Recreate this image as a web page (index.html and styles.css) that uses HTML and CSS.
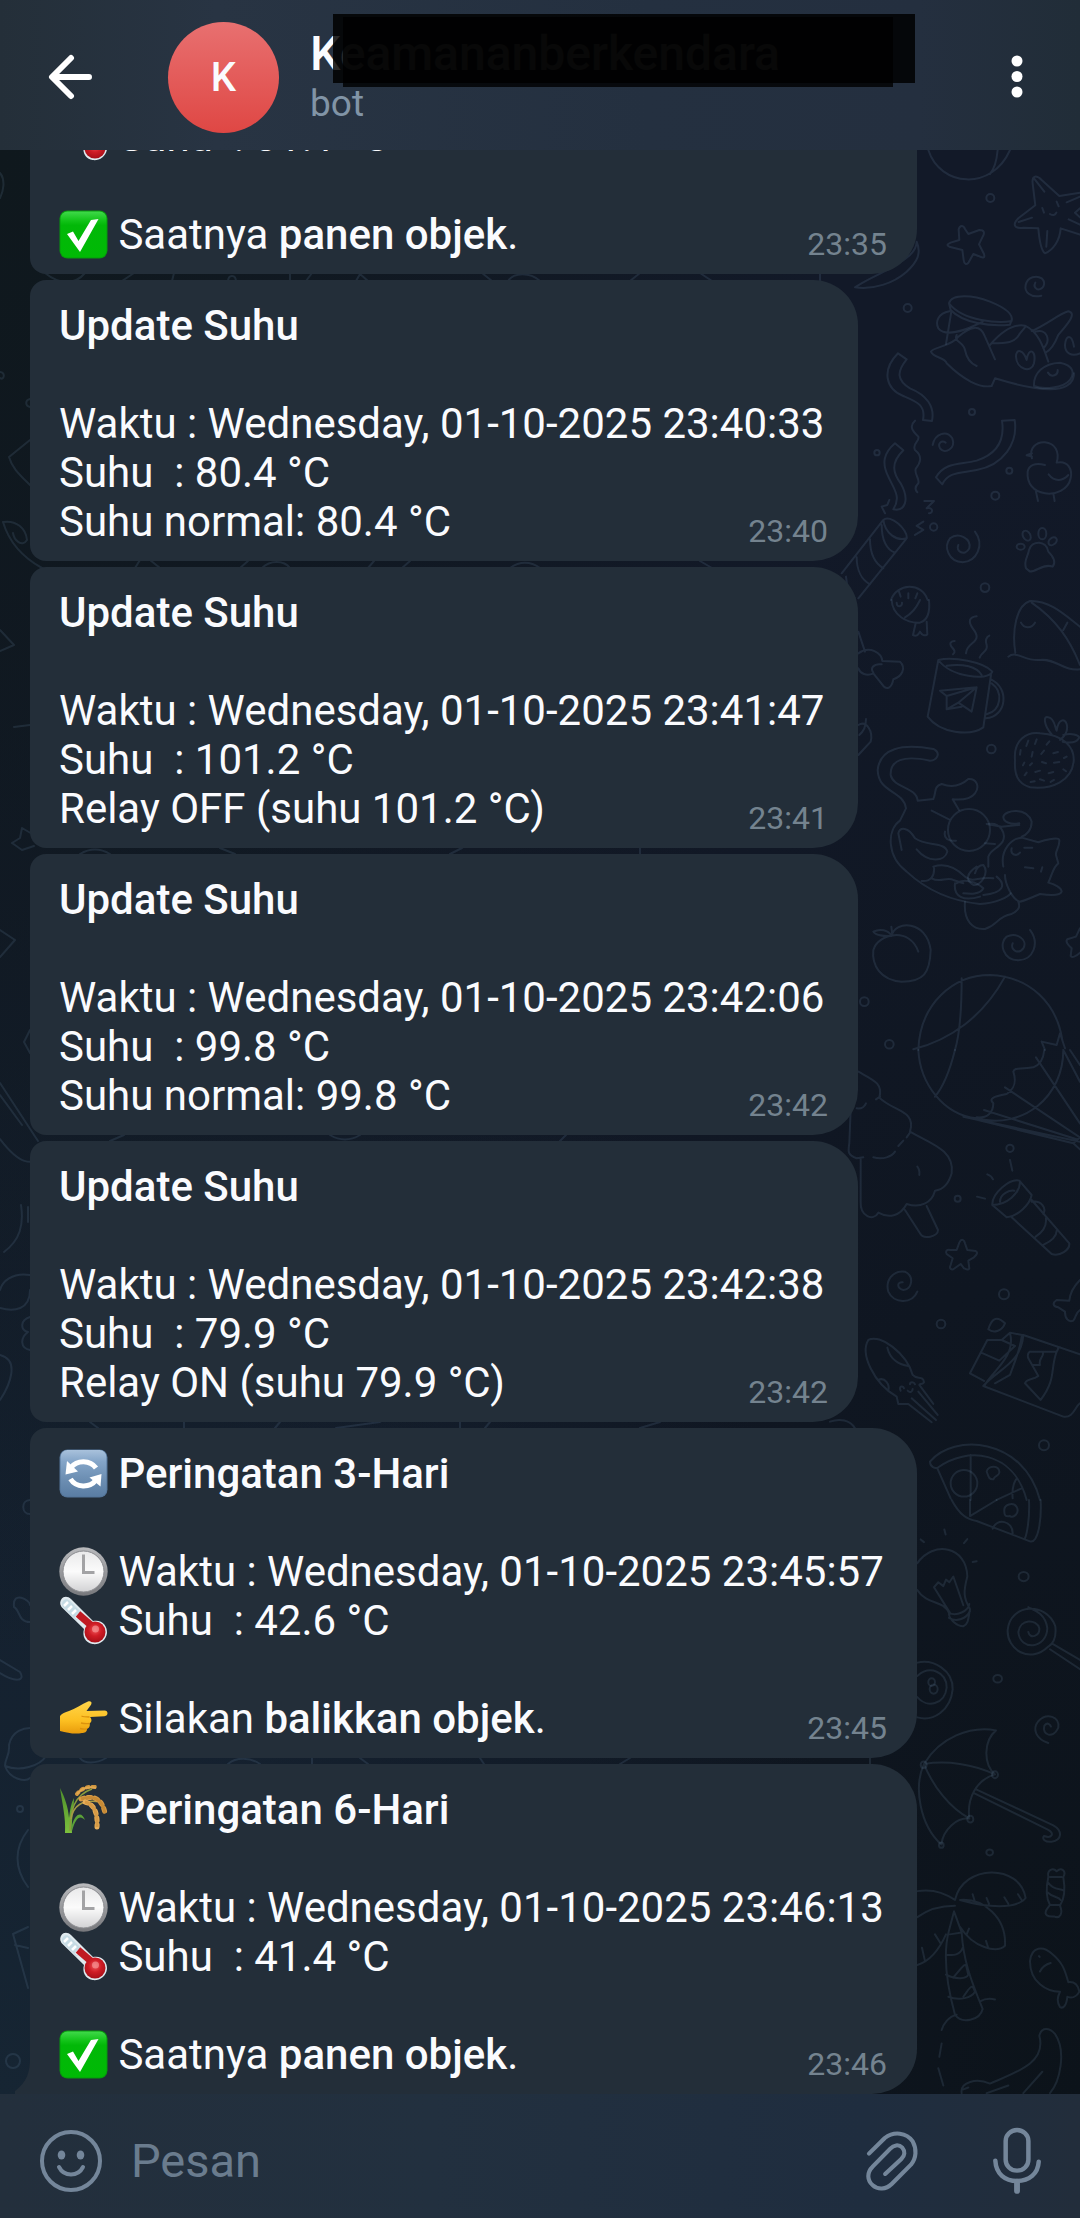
FILE: index.html
```html
<!DOCTYPE html>
<html lang="id">
<head>
<meta charset="utf-8">
<meta name="viewport" content="width=device-width, initial-scale=1">
<title>Chat</title>
<link rel="stylesheet" href="styles.css">
</head>
<body>
<svg class="defs" aria-hidden="true">
  <defs>
    <linearGradient id="gGreen" x1="0" y1="0" x2="0" y2="1"><stop offset="0" stop-color="#3fd94a"/><stop offset=".2" stop-color="#12c318"/><stop offset=".3" stop-color="#02b808"/><stop offset="1" stop-color="#00ba05"/></linearGradient>
    <linearGradient id="gBlue" x1="0" y1="0" x2="0" y2="1"><stop offset="0" stop-color="#a9c2dc"/><stop offset=".25" stop-color="#84a5c8"/><stop offset=".6" stop-color="#6e90b4"/><stop offset="1" stop-color="#5a7da3"/></linearGradient>
    <linearGradient id="gRim" x1="0" y1="0" x2="0" y2="1"><stop offset="0" stop-color="#b9babd"/><stop offset="1" stop-color="#77787c"/></linearGradient>
    <linearGradient id="gFace" x1="0" y1="0" x2="0" y2="1"><stop offset="0" stop-color="#e9e9ea"/><stop offset=".5" stop-color="#fbfbfb"/><stop offset="1" stop-color="#d2d2d4"/></linearGradient>
    <radialGradient id="gBulb" cx=".5" cy=".4" r=".6"><stop offset="0" stop-color="#f0575b"/><stop offset=".5" stop-color="#cf1c25"/><stop offset="1" stop-color="#a80f18"/></radialGradient>
    <linearGradient id="gHand" x1="0" y1="0" x2="0" y2="1"><stop offset="0" stop-color="#ffd54a"/><stop offset=".6" stop-color="#fcbf21"/><stop offset="1" stop-color="#e89b0c"/></linearGradient>
    <linearGradient id="gStem" x1="0" y1="0" x2="0" y2="1"><stop offset="0" stop-color="#4d8f2b"/><stop offset="1" stop-color="#7cc13d"/></linearGradient>
  </defs>
  <symbol id="check" viewBox="0 0 49 49">
    <rect x="0.5" y="0.5" width="48" height="48" rx="8" fill="#079a0c"/>
    <rect x="1.5" y="1.5" width="46" height="46" rx="7" fill="url(#gGreen)"/>
    <path d="M8 24 L14 21.500 L19.500 31 L32 10 L39.500 9 L21 42 Z" fill="#fff"/>
  </symbol>
  <symbol id="cycle" viewBox="0 0 49 49">
    <rect x="0.5" y="0.5" width="48" height="48" rx="8" fill="#54759a"/>
    <rect x="1.5" y="1" width="46" height="46.500" rx="7" fill="url(#gBlue)"/>
    <path d="M12 18.500 A15 13.500 0 0 1 37 19" fill="none" stroke="#fff" stroke-width="5"/>
    <path d="M6.500 25.500 L8 12 L19 22.500 Z" fill="#fff"/>
    <path d="M37 31 A15 13.500 0 0 1 11.500 30" fill="none" stroke="#fff" stroke-width="5"/>
    <path d="M42.500 25 L41.500 37.500 L30.500 28.500 Z" fill="#fff"/>
  </symbol>
  <symbol id="clock" viewBox="0 0 49 49">
    <circle cx="24.500" cy="24.500" r="24.200" fill="url(#gRim)"/>
    <circle cx="24.500" cy="24.500" r="20.500" fill="url(#gFace)" stroke="#8b8c90" stroke-width="1"/>
    <path d="M24.500 7.500 V25.500 H35.500" fill="none" stroke="#a3a3a5" stroke-width="3"/>
  </symbol>
  <symbol id="thermo" viewBox="0 0 49 49">
    <path d="M2.500 3 C4.500 0 9 0 12 3 L34 25 C43 23 48.500 30 48 37 C47 45 40 49 33.500 48 C26 46.500 23 40 25 33 L2.500 11 C0.500 8 1 5 2.500 3Z" fill="#dfe9ee"/>
    <path d="M4 5 C6 2.500 8.500 2.500 11 5 L24 18 L17.500 24.500 L4 11 C2.500 9 2.500 7 4 5Z" fill="#c6dbe4"/>
    <path d="M5 10 L9 6 M9 14 L13 10 M13 18 L17 14 M17 22 L21 18" stroke="#fff" stroke-width="2.500"/>
    <path d="M19 18 L33 30" stroke="#c01a22" stroke-width="7"/>
    <circle cx="36" cy="36" r="10.500" fill="url(#gBulb)"/>
    <circle cx="36.500" cy="33" r="3.500" fill="#f9a3a3" opacity=".6"/>
  </symbol>
  <symbol id="point" viewBox="0 0 49 49">
    <path d="M1 22 C3 19 6 18.500 10 17 C16 15 23 10 29 7.500 C32.500 6.500 33.500 9 31.500 11.500 L27.500 17 L45.500 16.500 C49.500 16.500 49.500 22 45.500 22.200 L31 23 C33 25 33 28 30.500 29.500 C31.500 32 30 34.500 28 35 C28 38 25.500 39 23 39 C16 40.500 9 39 1 37 Z" fill="url(#gHand)"/>
    <path d="M30.500 23 C27 23 24.500 23 22.500 22 M30.500 29.500 C27 30 24 29.500 22 29 M28 35 C25 35.500 23 35 21 34.500" fill="none" stroke="#dc920d" stroke-width="1.300"/>
  </symbol>
  <symbol id="rice" viewBox="0 0 49 49">
    <path d="M6 48 C7 32 3 18 1 3 C6 13 9 22 10 33 C11 25 12 18 15 13 C15 24 12 36 13 48 Z" fill="url(#gStem)"/>
    <path d="M11 46 C11 26 15 10 33 4" fill="none" stroke="#8a9c3c" stroke-width="1.500"/>
    <path d="M12 34 C14 21 23 14 41 17" fill="none" stroke="#a59b45" stroke-width="1.500"/>
    <path d="M13 40 C17 27 23 27 26 35 C21 30 17 32 13 46 Z" fill="#5ba238"/>
    <path d="M18 9 C23 3 29 1 37 2" fill="none" stroke="#cf9540" stroke-width="4" stroke-linecap="round" stroke-dasharray="2 4"/>
    <path d="M18 9 C23 3 29 1 37 3" fill="none" stroke="#e0a850" stroke-width="2"/>
    <path d="M22 14 C34 10 43 13 46 28" fill="none" stroke="#d99c46" stroke-width="5" stroke-linecap="round" stroke-dasharray="3 4"/>
    <path d="M22 14 C34 10 43 13 46 28" fill="none" stroke="#c78a35" stroke-width="3"/>
    <path d="M26 17 C34 19 39 26 38 42" fill="none" stroke="#e8af5a" stroke-width="5" stroke-linecap="round" stroke-dasharray="3 4"/>
    <path d="M26 17 C34 19 39 26 38 42" fill="none" stroke="#d69a45" stroke-width="3"/>
  </symbol>
</svg>

<div class="app">
  <header class="topbar">
    <button class="icon-btn back" type="button" aria-label="Kembali">
      <svg width="46" height="46" viewBox="0 0 46 46" fill="none" stroke="#fff" stroke-width="6" stroke-linecap="round" stroke-linejoin="round"><path d="M24 4 L5 23 L24 42 M6 23 H42"/></svg>
    </button>
    <div class="avatar">K</div>
    <div class="peer">
      <h1 class="peer-name">Keamananberkendara</h1>
      <span class="peer-status">bot</span>
      <span class="cover cover-back"></span>
      <span class="cover cover-front"></span>
    </div>
    <button class="icon-btn more" type="button" aria-label="Menu">
      <svg width="12" height="46" viewBox="0 0 12 46" fill="#fff"><circle cx="6" cy="7" r="5.500"/><circle cx="6" cy="22.500" r="5.500"/><circle cx="6" cy="38" r="5.500"/></svg>
    </button>
  </header>

  <main class="chat">
    <svg class="wallpaper" viewBox="0 150 1080 1944" preserveAspectRatio="xMaxYMin slice" aria-hidden="true">
      <g transform="translate(830 150) scale(.3333)">
        <path d="M295 0 C330 110 485 125 540 0 M503 0 C500 35 490 60 480 72"/>
        <circle cx="481" cy="144" r="12"/><circle cx="233" cy="474" r="12"/><circle cx="426" cy="786" r="9"/><circle cx="141" cy="908" r="8"/><circle cx="538" cy="962" r="9"/><circle cx="496" cy="1037" r="12"/><circle cx="311" cy="1131" r="11"/><circle cx="465" cy="1313" r="13"/>
        <path d="M608 100 C605 75 620 75 635 90 L688 138 L750 128 M608 100 L616 166 L565 205 C545 225 555 237 580 233 L625 235 C628 270 632 300 645 310 C670 300 690 270 692 235 L750 254 M612 85 L643 125 M566 216 L606 203 M652 243 L649 290 M710 157 L750 140 M716 208 L750 224 M735 188 L750 175 M735 188 L750 202 M660 192 Q672 200 679 188 M637 174 L642 188 M680 155 L686 169"/>
        <path d="M386 238 C390 225 400 225 405 237 L415 252 L448 240 C463 240 465 248 458 260 L447 283 L462 312 C466 325 458 325 445 318 L430 312 L416 337 C410 346 402 342 401 330 L397 300 L358 290 C350 286 350 283 362 278 L388 270 Z"/>
        <path d="M634 437 C600 445 583 425 587 405 C593 380 620 375 635 385 C650 400 640 420 622 418 C612 412 612 405 616 398"/>
        <path d="M75 412 C130 375 190 360 240 315 C255 300 260 290 260 275 C275 310 262 335 230 365 C190 400 130 420 75 412Z"/>
        <path d="M357 460 C365 430 430 435 480 455 C530 475 550 495 545 513 C510 520 400 515 357 460 M357 460 L362 480 C400 520 480 530 540 524 L545 510 M364 485 L348 582 M358 484 C325 490 315 515 325 535 C345 560 400 545 458 515"/>
        <path d="M303 605 C310 590 365 590 385 560 C420 530 450 520 465 560 L495 628 M303 605 C310 625 345 620 350 640 C400 690 450 715 485 708 L495 685 C560 705 640 725 690 715 C720 708 732 690 732 670 M380 555 C370 575 400 575 405 600 C410 625 420 640 440 648 M480 585 C510 550 545 520 585 527 C625 545 640 590 655 635 M485 580 C530 580 555 580 570 550 L585 532 M605 543 C640 530 690 490 715 484 C745 490 705 530 685 555 C675 580 665 600 648 607 M617 545 C650 535 665 570 640 595"/>
        <path d="M612 708 C610 670 640 640 690 638 C730 645 735 670 720 690 C700 715 640 720 612 708 M558 620 C558 595 580 598 590 630 C595 590 620 600 612 640 C605 670 560 660 558 620Z M705 585 C708 555 725 550 732 590 M705 585 C705 610 725 620 750 610 M654 668 C665 685 685 675 683 660"/>
        <path d="M204 610 L230 628 C200 665 200 690 240 715 C290 735 315 770 306 813 L279 810 C288 765 260 755 220 738 C165 715 155 660 204 610Z M516 812 L554 810 C565 880 520 945 440 960 C390 970 355 965 337 1003 L318 982 C345 935 390 945 440 932 C500 912 525 870 516 812Z M195 880 L220 901 C180 940 190 970 212 1000 C240 1050 225 1085 190 1078 C215 1040 190 1015 175 980 C155 940 160 910 195 880Z M255 812 C235 830 250 845 265 860 C270 875 245 880 255 900 C280 920 270 940 258 955 C250 970 270 985 265 1000 C255 1010 255 1020 262 1027"/>
        <path d="M308 885 C315 850 350 840 367 865 C378 895 345 915 330 895 C322 880 335 870 347 878"/>
        <path d="M606 925 C595 895 620 875 645 877 C675 880 690 905 680 938 C715 930 728 960 722 985 C715 1020 675 1035 645 1030 C610 1025 590 1000 593 965 C597 945 615 938 645 945 M656 973 C675 998 700 992 715 975 M618 1025 L624 1053 M670 1030 L674 1053 M606 910 L590 916 L606 920"/>
        <path d="M435 1145 C465 1185 440 1235 398 1237 C355 1235 340 1190 360 1165 C385 1145 425 1165 418 1195 C405 1220 375 1205 385 1185"/>
        <path d="M588 1255 C580 1230 595 1220 597 1200 C605 1170 650 1170 655 1205 C670 1220 680 1235 668 1250 C640 1240 620 1265 600 1265Z"/>
        <ellipse cx="590" cy="1157" rx="11" ry="16" transform="rotate(-30 590 1157)"/><ellipse cx="637" cy="1151" rx="12" ry="17"/><ellipse cx="668" cy="1174" rx="10" ry="14" transform="rotate(50 668 1174)"/><ellipse cx="572" cy="1190" rx="12" ry="9"/>
        <path d="M35 1270 L160 1110 C180 1090 235 1140 230 1165 L85 1345 M160 1110 C165 1150 200 1175 230 1165 M155 1125 C155 1170 170 1200 195 1208 M120 1168 C120 1215 135 1240 160 1255 M80 1222 C80 1260 95 1290 120 1303 M48 1280 C50 1310 60 1335 75 1345 M155 1070 L165 1090 M155 1070 L172 1065 L178 1050 M283 1053 H312 L290 1075 C310 1070 310 1090 297 1090 M280 1115 L260 1128 L280 1140 L255 1155"/>
        <path d="M183 1350 C200 1300 275 1295 293 1350 M207 1325 L212 1340 M235 1330 V1345 M262 1330 L256 1345"/>
      </g>
      <g transform="translate(830 600) scale(.3333)">
        <path d="M185 0 C187 45 230 70 270 68 C295 60 300 30 297 0 M225 52 C255 35 265 10 270 0 M200 8 C200 25 218 20 216 8 M257 70 L249 105 Q262 112 270 95 Q280 112 292 103 L290 65"/>
        <path d="M85 95 L105 155 M85 160 C120 135 155 160 157 183 L210 185 C230 205 215 230 190 238 C185 265 170 270 160 258 L130 220 C110 230 90 220 85 205 M155 193 C130 190 120 205 130 218 M85 375 C110 360 130 395 122 425 L85 465 M108 357 C108 380 100 395 88 405"/>
        <path d="M325 180 C370 170 460 185 487 215 C475 245 360 230 325 180Z L293 350 C330 400 420 410 460 382 L483 225 M350 197 C400 190 440 200 455 225 M483 238 C540 265 530 350 468 355 M485 250 C520 275 515 330 470 343 M330 272 L440 262 L425 335 L385 308 L350 328 L350 288Z M350 288 L440 262 L385 308 M350 328 L395 320"/>
        <path d="M369 163 C385 150 355 140 362 128 Q366 123 374 123 M408 160 C410 130 440 130 440 110 C440 90 415 80 420 60 Q425 50 440 49 M449 173 C455 155 475 155 470 135 Q463 115 478 107"/>
        <path d="M535 170 C560 150 585 185 630 180 C680 175 700 215 750 208 M556 158 C545 90 560 15 600 3 C660 0 710 50 750 80 M605 8 C680 60 720 120 750 195 M573 68 C583 88 605 85 615 68 M712 68 L700 90"/>
        <path d="M555 480 C550 420 590 395 630 400 C700 405 735 440 731 485 C725 540 670 570 600 562 C560 550 553 520 555 480Z M665 403 C640 375 640 345 655 352 C675 355 675 385 680 392 C685 355 705 355 710 372 C715 390 705 408 690 420 M700 405 C725 398 745 405 748 412 C740 430 720 430 698 425"/>
        <path d="M595 422 L589 438 M620 418 L615 432 M658 424 L650 434 M572 450 L570 464 M608 456 L605 470 M642 452 L634 462 M670 460 L684 456 M583 488 L579 496 M606 490 L600 496 M636 486 L648 490 M672 488 L688 486 M702 474 L710 470 M590 518 L584 526 M616 516 L630 512 M656 520 L670 516 M700 508 L708 514 M602 546 L614 544 M630 538 L642 542 M662 546 L672 540"/>
        <circle cx="484" cy="447" r="13"/><circle cx="103" cy="1205" r="13"/><circle cx="178" cy="1333" r="13"/><circle cx="417" cy="690" r="63"/>
        <path d="M228 625 C220 570 145 580 143 510 C150 445 215 430 310 447 C335 460 320 482 300 482 C220 465 180 480 182 525 C190 565 260 560 263 602 L310 597 C320 575 310 560 335 552 C370 565 395 555 415 537 C440 535 450 560 435 580 C420 600 390 600 368 598 L387 630 M228 625 L210 662 C170 690 170 770 230 815 C300 880 380 905 450 912 C500 910 535 890 542 880 M215 750 L205 700 C210 680 235 680 255 715 C290 740 345 725 352 755 C345 785 295 790 260 748 M305 632 L357 658 M312 800 C315 830 300 845 275 843 M310 800 C340 790 370 795 405 830 C430 850 440 830 490 835 M305 835 C330 850 350 830 370 840 L400 850 M375 850 C370 890 400 905 450 890 M380 850 C400 835 440 845 460 865 C450 885 420 882 400 880 M500 830 C530 855 520 880 460 885"/>
        <path d="M475 672 C510 665 530 700 518 725 C505 745 480 750 475 770 L475 800 M470 672 L515 680 L568 675 M568 670 C540 675 520 665 520 650 C525 630 590 620 605 665 C605 690 590 705 575 710 M345 695 C340 715 355 725 378 722 M465 730 L495 732 M520 800 C510 750 545 715 575 713 L625 727 C645 720 685 710 688 720 C690 740 675 755 678 765 L685 790 C670 800 668 820 655 848 C675 852 695 865 695 875 C690 890 650 885 630 882 C610 890 580 905 568 905 C545 895 525 850 525 825 M405 905 C400 965 430 990 465 987 C505 975 500 950 545 942 C570 930 570 918 565 905 M583 743 L607 743 M585 802 L610 805 M545 745 C540 765 560 770 570 758 M637 802 L633 815 M440 800 C410 820 405 840 430 855 C450 860 480 820 460 795 C450 795 440 800 435 820"/>
        <path d="M185 1008 C160 1010 135 1005 130 995 C150 985 175 990 185 1008 C195 960 290 960 302 1050 C300 1120 280 1145 215 1145 C150 1140 125 1095 130 1050 C145 1000 240 980 265 1055 M184 980 L187 1005"/>
        <path d="M600 990 C630 1030 610 1080 565 1081 C520 1080 505 1030 530 1010 C560 995 595 1020 580 1045 C565 1065 540 1050 548 1030"/>
        <path d="M750 985 L738 1010 L712 1018 C705 1025 715 1035 725 1045 L722 1068 C725 1075 738 1070 750 1058"/>
        <path d="M265 1350 C270 1210 370 1125 480 1125 C600 1130 680 1210 697 1320 M395 1135 C395 1230 390 1300 375 1350 M525 1130 C460 1250 360 1320 250 1348 M635 1325 L680 1335 L690 1300 L705 1345 M635 1325 L645 1350"/>
      </g>
      <g transform="translate(830 1050) scale(.3333)">
        <path d="M265 0 C270 100 340 195 440 205 C580 240 700 140 700 0 M375 0 C360 60 340 110 315 140 M643 0 C640 30 630 45 610 52 C570 60 555 50 550 65 C560 95 555 115 530 132 C490 140 475 145 490 160 C490 190 470 205 440 202 M400 200 L750 275 M462 180 L740 268 M525 112 L750 262 M618 22 L750 220 M700 0 L750 95 M720 0 L750 45 M410 202 L730 280 L750 262 M730 280 L750 298"/>
        <path d="M85 65 C130 90 160 100 148 143 C190 185 260 180 240 245 C300 280 375 300 365 370 C355 405 335 420 315 422 C305 460 270 475 230 462 C210 500 175 505 145 488 C130 515 90 500 92 455 V325 M80 325 C50 315 55 300 58 280 L62 180 M80 325 L100 322 M130 322 C160 330 185 320 195 305 M205 288 L220 272 M230 262 L240 248 M80 175 Q100 178 108 160 M138 148 L150 140 M225 480 L270 550 C280 570 325 560 324 540 L290 468 M262 350 Q270 360 268 375"/>
        <circle cx="540" cy="295" r="11"/><circle cx="383" cy="446" r="9"/><circle cx="522" cy="733" r="15"/><circle cx="333" cy="822" r="13"/><circle cx="642" cy="1186" r="15"/>
        <path d="M487 465 C485 430 540 385 568 392 L605 435 C600 465 560 500 530 502 L487 465 C530 465 570 430 570 395 M510 455 C510 430 540 420 553 422 M545 502 L665 612 C690 620 720 600 718 580 L605 450 M605 455 C635 450 650 475 640 492 M617 560 C640 545 650 525 648 505 M640 585 C660 575 680 560 680 542 M540 330 L547 362 M472 373 Q485 378 489 388 M441 440 L465 446"/>
        <path d="M388 578 C394 565 402 568 405 580 L412 600 L437 603 C445 608 440 615 432 622 L415 632 L418 655 C415 662 408 658 402 655 L392 642 L370 658 C360 660 358 652 362 645 L368 625 L350 612 C345 605 350 598 360 600 L380 600Z"/>
        <path d="M262 725 C245 765 190 760 175 725 C165 690 190 660 225 665 C255 680 245 720 220 720 C200 715 200 695 218 697"/>
        <path d="M750 690 C730 710 720 730 718 752 L680 750 C665 760 670 770 685 772 L705 785 C705 805 715 818 730 812 C740 800 735 790 750 780"/>
        <path d="M200 1040 C130 1000 90 910 115 870 C150 850 230 910 248 975 C260 990 280 975 282 997 C275 1005 270 1000 268 1005 L310 1062 M200 1040 L205 1062 L235 1062 L305 1117 M265 1025 L323 1095 M245 1045 L318 1110 M172 893 C180 930 210 945 235 948 M145 990 C165 980 180 1005 175 1022 M212 1022 C205 1010 218 1005 222 1015 M240 1003 C240 995 252 995 255 1003 M233 1022 C240 1030 248 1025 248 1017"/>
        <path d="M475 838 C485 805 500 795 525 820 C515 845 490 850 475 838Z M472 870 L420 970 L462 993 M472 870 L515 870 L540 848 L580 856 M515 870 L555 888 M452 907 L508 932 L555 888 M580 855 L750 913 M580 855 C575 940 500 960 460 1008 L700 1100 C730 1105 735 1070 750 1060 M540 850 C560 920 480 970 465 1005 M575 860 C570 900 560 920 540 975 L495 1000 M600 905 H680 C690 890 680 890 690 892 M680 905 C660 960 680 985 632 1050 L585 1000 C590 985 610 990 625 978 L595 925 C590 910 600 905 600 905 M640 905 C640 925 625 925 630 945 L610 945"/>
        <path d="M300 1235 C370 1150 580 1160 630 1350 M300 1235 C300 1250 315 1258 325 1252 C410 1190 550 1200 590 1350 M422 1215 V1350 M322 1255 L362 1345 M470 1265 C475 1245 510 1245 508 1268 C505 1280 495 1275 490 1288 C475 1290 475 1275 470 1265Z M500 1350 L575 1315 M548 1345 C545 1310 555 1290 562 1285"/><circle cx="402" cy="1300" r="40"/>
        <path d="M0 1115 C30 1105 60 1110 75 1135"/>
      </g>
      <g transform="translate(830 1500) scale(.3333 .3827)">
        <path d="M365 0 C390 40 410 50 440 55 L600 108 C625 115 635 50 632 0 M420 0 V42 L500 0 M597 0 C600 50 590 90 585 100 M488 75 C500 45 550 55 548 88 M523 30 C520 10 550 5 560 18 C570 35 550 48 540 42 C525 45 523 38 523 30"/>
        <path d="M262 165 C310 105 410 120 412 200 C400 240 400 255 420 285 C415 310 415 325 400 330 C380 330 355 310 357 295 C340 260 290 275 262 235 M357 295 C380 305 415 290 418 272 M357 308 C380 320 410 310 420 290 M360 295 L312 228 L325 215 L340 225 L348 208 L358 215 L370 200 L400 275 M272 103 L282 110 M343 77 L347 90 M412 102 L402 113 M428 162 L440 160"/>
        <ellipse cx="581" cy="200" rx="15" ry="12"/><ellipse cx="503" cy="467" rx="13" ry="10"/><ellipse cx="479" cy="921" rx="10" ry="8"/>
        <path d="M655 383 C600 430 530 390 533 340 C540 270 650 265 676 330 C680 360 670 375 655 383 M595 345 C600 365 630 355 628 335 C620 310 570 310 565 345 C570 395 650 390 652 335 C645 290 600 285 595 280 M660 390 L750 442 M668 376 L750 418"/>
        <path d="M262 425 C310 415 370 445 368 495 C362 550 310 580 262 568 M262 460 C300 430 350 450 350 490 C345 535 290 545 262 515"/><circle cx="305" cy="476" r="10"/><circle cx="311" cy="494" r="12"/>
        <path d="M655 635 C620 625 605 600 625 578 C650 555 690 565 685 595 C670 625 635 615 643 590 C650 580 660 585 663 592"/>
        <path d="M282 690 C330 620 420 590 498 602 C460 630 460 690 495 717 C440 730 410 780 418 832 C380 830 340 860 334 900 C270 850 250 750 282 690 C350 680 430 690 495 717 M282 690 C310 750 360 805 418 832 M440 757 L670 850 C700 865 695 890 665 893 C645 895 635 885 642 878 C665 885 675 872 655 862 L432 766"/>
        <circle cx="281" cy="692" r="9"/><circle cx="495" cy="718" r="9"/><circle cx="421" cy="834" r="9"/><circle cx="334" cy="902" r="7"/>
        <path d="M262 1022 C310 1015 350 1030 375 1045 C400 950 570 950 587 1040 C560 1070 470 1065 390 1045 C460 1040 530 1090 525 1165 C500 1185 430 1170 390 1115 M375 1060 C320 1060 285 1075 262 1090 M262 1215 C300 1205 330 1170 348 1135 M372 1075 L357 1125 C340 1180 345 1250 375 1345 C395 1370 450 1360 458 1330 C420 1250 400 1200 395 1130 L372 1075 M360 1135 L395 1130 M350 1188 C370 1190 390 1190 398 1170 M348 1240 C380 1255 410 1250 415 1240 C405 1210 415 1200 370 1248 M355 1298 C390 1310 425 1300 435 1285 C425 1260 420 1275 400 1298 M450 1310 Q470 1300 495 1305 M380 1345 C355 1350 340 1370 335 1385 M335 1420 L328 1455 M325 1485 L340 1530 M315 1135 L333 1160 M276 1170 L285 1205 M428 1030 L434 1048 M470 1040 L477 1055 M523 1038 L535 1055 M564 1030 L575 1045 M417 1120 L410 1135 M468 1152 L474 1168"/>
        <path d="M655 985 C650 965 670 960 680 970 C695 958 710 970 700 985 C705 1010 705 1040 690 1060 C700 1080 690 1095 672 1088 C655 1090 640 1085 650 1070 L660 1058 C645 1035 650 1005 655 985 M655 1000 C670 1020 690 1015 700 1020 M652 1025 C670 1040 685 1035 692 1045 M660 985 H695 M660 1058 H688"/>
        <path d="M600 1205 C605 1165 640 1165 665 1185 C700 1210 705 1230 715 1260 C735 1258 745 1270 748 1285 C735 1305 720 1300 712 1298 C710 1320 700 1330 690 1325 C680 1310 682 1300 690 1285 C650 1285 600 1260 600 1205Z M662 1210 Q640 1215 630 1232 M627 1192 L629 1194"/>
        <path d="M395 1550 C390 1520 440 1510 480 1525 C560 1495 650 1470 628 1400 C635 1375 660 1380 675 1395 C710 1440 690 1520 660 1550 M470 1550 L535 1530 M580 1550 L637 1494 M400 1540 L415 1535"/>
      </g>
      <path d="M0 173 C6 180 3 192 0 198 M0 372 C6 372 4 381 0 378 M30 399 C25 400 25 406 30 407 M30 440 L9 457 C12 468 20 475 30 485 M3 522 C16 520 26 528 27 540 C22 548 14 540 13 533 M3 522 C9 542 22 557 42 568 M0 630 L14 645 L0 651 M14 727 L30 725 M12 843 L20 838 L22 828 L34 835 M12 843 L22 850 L34 846 M0 930 L15 940 L0 957 M30 1030 L24 1042 L30 1053 M0 1083 L38 1141 M0 1095 L22 1125 M0 1139 C20 1165 30 1165 45 1158 M21 1205 C24 1225 20 1240 4 1252 M28 1207 V1222 M30 1275 C12 1272 2 1282 0 1290 M0 1308 C14 1312 30 1310 30 1290 M30 1317 C20 1320 20 1330 28 1332 C20 1338 20 1348 30 1350 M0 1355 C20 1360 10 1385 0 1400 M30 1500 C21 1500 21 1514 30 1514 M14 1607 C12 1590 30 1600 30 1605 M14 1607 C20 1610 18 1622 30 1622 M0 1660 L20 1672 C26 1682 14 1682 0 1673 M5 1766 C10 1780 26 1782 30 1778 M5 1766 C20 1772 40 1766 46 1756 M5 1766 C5 1758 10 1756 9 1745 C12 1730 25 1728 30 1728 M28 1830 C14 1848 14 1868 28 1887 M13 1934 L28 1927 M13 1934 L28 1988 M15 1945 L28 1948"/>
      <circle cx="20" cy="1809" r="3"/><circle cx="13" cy="2061" r="7"/>
      <path d="M45 273 C60 285 75 285 85 273 M134 273 L122 281 M174 273 L172 281 M228 282 C228 274 236 274 236 282 M290 273 V281 M312 273 L306 281 M356 281 L360 274 L368 281 M482 273 L492 281 M508 281 C514 272 530 272 540 281 M630 281 L640 273 M700 273 L712 281 M820 273 V281 M135 568 L140 560 M150 560 L160 568 M240 568 L248 561 M262 568 C270 560 284 560 290 568 M374 561 L368 568 M410 561 L402 568 M510 568 C520 561 530 561 540 568 M700 561 L712 568 M80 854 C90 848 100 848 110 854 M220 848 L235 854 M450 854 L462 848 M640 848 V854 M110 1141 L124 1135 M330 1135 C340 1141 350 1141 360 1135 M560 1141 L566 1135 M90 1422 L98 1428 M184 1422 V1428 M275 1428 L280 1422 M336 1428 L380 1422 M460 1422 V1428 M485 1428 L490 1422 M640 1428 L660 1422 M80 1758 C84 1764 96 1764 106 1758 M228 1764 C236 1757 250 1757 260 1764 M312 1758 V1764 M360 1758 L368 1764 M480 1758 L484 1764 M620 1764 L630 1758 M870 1758 V1764"/>
    </svg>

    <article class="bubble wide">
      <div class="text">
        <p><svg class="emoji"><use href="#thermo"/></svg> Suhu  : 31.1 °C</p>
        <p class="gap"><svg class="emoji"><use href="#check"/></svg> Saatnya <b>panen objek</b>.</p>
      </div>
      <time>23:35</time>
    </article>
    <article class="bubble">
      <div class="text">
        <p><b>Update Suhu</b></p>
        <p class="gap">Waktu : Wednesday, 01-10-2025 23:40:33</p>
        <p>Suhu  : 80.4 °C</p>
        <p>Suhu normal: 80.4 °C</p>
      </div>
      <time>23:40</time>
    </article>
    <article class="bubble">
      <div class="text">
        <p><b>Update Suhu</b></p>
        <p class="gap">Waktu : Wednesday, 01-10-2025 23:41:47</p>
        <p>Suhu  : 101.2 °C</p>
        <p>Relay OFF (suhu 101.2 °C)</p>
      </div>
      <time>23:41</time>
    </article>
    <article class="bubble">
      <div class="text">
        <p><b>Update Suhu</b></p>
        <p class="gap">Waktu : Wednesday, 01-10-2025 23:42:06</p>
        <p>Suhu  : 99.8 °C</p>
        <p>Suhu normal: 99.8 °C</p>
      </div>
      <time>23:42</time>
    </article>
    <article class="bubble">
      <div class="text">
        <p><b>Update Suhu</b></p>
        <p class="gap">Waktu : Wednesday, 01-10-2025 23:42:38</p>
        <p>Suhu  : 79.9 °C</p>
        <p>Relay ON (suhu 79.9 °C)</p>
      </div>
      <time>23:42</time>
    </article>
    <article class="bubble wide">
      <div class="text">
        <p><svg class="emoji"><use href="#cycle"/></svg> <b>Peringatan 3-Hari</b></p>
        <p class="gap"><svg class="emoji"><use href="#clock"/></svg> Waktu : Wednesday, 01-10-2025 23:45:57</p>
        <p><svg class="emoji"><use href="#thermo"/></svg> Suhu  : 42.6 °C</p>
        <p class="gap"><svg class="emoji"><use href="#point"/></svg> Silakan <b>balikkan objek</b>.</p>
      </div>
      <time>23:45</time>
    </article>
    <article class="bubble wide last">
      <div class="text">
        <p><svg class="emoji"><use href="#rice"/></svg> <b>Peringatan 6-Hari</b></p>
        <p class="gap"><svg class="emoji"><use href="#clock"/></svg> Waktu : Wednesday, 01-10-2025 23:46:13</p>
        <p><svg class="emoji"><use href="#thermo"/></svg> Suhu  : 41.4 °C</p>
        <p class="gap"><svg class="emoji"><use href="#check"/></svg> Saatnya <b>panen objek</b>.</p>
      </div>
      <time>23:46</time>
      <svg class="tail" viewBox="0 0 16 36" aria-hidden="true"><path d="M16 0 H15 C15 14 12 24 0 33 V36 H16Z" fill="#232e39"/></svg>
    </article>
  </main>

  <footer class="composer">
    <button class="icon-btn" type="button" aria-label="Emoji">
      <svg width="64" height="64" viewBox="0 0 64 64" fill="none" stroke="#74869a" stroke-width="4" stroke-linecap="round"><circle cx="32" cy="32" r="29"/><path d="M20 38 C25 48 39 48 44 38" stroke-width="4"/><g fill="#74869a" stroke="none"><ellipse cx="22.500" cy="26" rx="3.800" ry="4.500"/><ellipse cx="41.500" cy="26" rx="3.800" ry="4.500"/></g></svg>
    </button>
    <input class="message" type="text" placeholder="Pesan" aria-label="Pesan">
    <button class="icon-btn" type="button" aria-label="Lampirkan">
      <svg width="64" height="68" viewBox="0 0 64 68" fill="none" stroke="#74869a" stroke-width="12" stroke-linecap="round" stroke-linejoin="round"><g transform="scale(.3444 .3333) translate(-930 -442)"><path d="M956 522 L1002 475 C1028 454 1065 458 1083 485 C1095 508 1094 535 1078 555 L1022 613 C1005 630 982 631 967 617 C950 602 950 578 966 562 L1018 507 C1028 496 1042 493 1053 504 C1062 515 1060 528 1050 538 L1003 583"/></g></svg>
    </button>
    <button class="icon-btn" type="button" aria-label="Pesan suara">
      <svg width="64" height="68" viewBox="0 0 64 68" fill="none" stroke="#74869a" stroke-width="13" stroke-linecap="round"><g transform="scale(.3444 .3333) translate(-1292 -442)"><rect x="1352" y="451" width="66" height="122" rx="33"/><path d="M1322 543 C1324 583 1350 604 1385 604 C1420 604 1446 583 1448 546"/><path d="M1385 606 V634" stroke-width="17"/></g></svg>
    </button>
  </footer>
</div>
</body>
</html>
```

FILE: styles.css
```css
* { box-sizing: border-box; }

body {
  margin: 0;
  font-family: Roboto, "Liberation Sans", sans-serif;
  background: #121928;
  color: #fafbfe;
}

.defs { position: absolute; width: 0; height: 0; }

.app {
  display: flex;
  flex-direction: column;
  height: 100vh;
}

/* Top bar */
.topbar {
  display: flex;
  align-items: center;
  flex: none;
  height: 150px;
  padding: 4px 31px 0 38px;
  background: linear-gradient(90deg, #242f39, #283443 20%, #243040 60%, #242f3f 85%, #212d38);
}

.icon-btn {
  display: flex;
  align-items: center;
  justify-content: center;
  flex: none;
  width: 64px;
  height: 68px;
  padding: 0;
  border: 0;
  background: none;
}

.avatar {
  display: flex;
  align-items: center;
  justify-content: center;
  flex: none;
  width: 111px;
  height: 111px;
  margin: 0 31px 0 66px;
  border-radius: 50%;
  background: linear-gradient(#e87070, #df4744);
  font-size: 40px;
  font-weight: 500;
}

.peer {
  position: relative;
  display: flex;
  flex-direction: column;
  flex: 1;
  min-width: 0;
}

.peer-name {
  margin: 0;
  font-size: 48px;
  font-weight: 500;
  line-height: 54px;
}

.peer-status {
  font-size: 37px;
  line-height: 46px;
  color: #8194a6;
}

.cover { position: absolute; }

.cover-back {
  top: -13px;
  left: 23px;
  width: 582px;
  height: 69px;
  background: rgba(0, 0, 0, .84);
}

.cover-front {
  top: -10px;
  left: 33px;
  width: 550px;
  height: 70px;
  background: rgba(0, 0, 0, .8);
}

/* Conversation */
.chat {
  position: relative;
  display: flex;
  flex: 1;
  flex-direction: column;
  align-items: flex-start;
  justify-content: flex-end;
  gap: 6px;
  min-height: 0;
  padding: 0 30px;
  overflow: hidden;
  background:
    radial-gradient(ellipse at 0 0, #0f181d, transparent 55%),
    radial-gradient(ellipse at 0 100%, #162533, transparent 55%),
    radial-gradient(ellipse at 100% 100%, #0c131a, transparent 60%),
    #121928;
}

.wallpaper {
  position: absolute;
  inset: 0;
  width: 100%;
  height: 100%;
  fill: none;
  stroke: rgba(125, 165, 200, .14);
  stroke-width: 2px;
}

.wallpaper path,
.wallpaper circle,
.wallpaper ellipse {
  vector-effect: non-scaling-stroke;
  stroke-linecap: round;
  stroke-linejoin: round;
}

.bubble {
  position: relative;
  display: grid;
  flex: none;
  min-width: 828px;
  padding: 0 30px 0 29px;
  border-radius: 16px 45px 45px 16px;
  background: #232e39;
}

.bubble.wide { min-width: 887px; }

.text {
  grid-area: 1 / 1;
  padding: 21px 0 15px;
  font-size: 42px;
  line-height: 49px;
}

.text p {
  margin: 0;
  white-space: pre;
}

.text .gap { margin-top: 49px; }

.text b { font-weight: 500; }

.emoji {
  width: 49px;
  height: 49px;
  vertical-align: -10px;
}

time {
  grid-area: 1 / 1;
  place-self: end;
  padding-bottom: 11px;
  font-size: 32px;
  line-height: 38px;
  color: #74838f;
}

.bubble.last { border-bottom-left-radius: 0; }

.tail {
  position: absolute;
  bottom: 0;
  left: -15px;
  width: 16px;
  height: 36px;
}

/* Composer */
.composer {
  display: flex;
  align-items: center;
  flex: none;
  height: 124px;
  padding: 10px 31px 0 39px;
  background: linear-gradient(90deg, #232f3c, #22303f 40%, #1f2d3f 80%, #222d3b);
}

.message {
  flex: 1;
  min-width: 0;
  height: 66px;
  margin: 0 29px 2px 28px;
  padding: 0;
  border: 0;
  outline: 0;
  background: none;
  color: #fafbfe;
  font-family: inherit;
  font-size: 47px;
}

.message::placeholder { color: #6a7c8e; opacity: 1; }

.composer .icon-btn:last-child { margin-left: 61px; }
```
